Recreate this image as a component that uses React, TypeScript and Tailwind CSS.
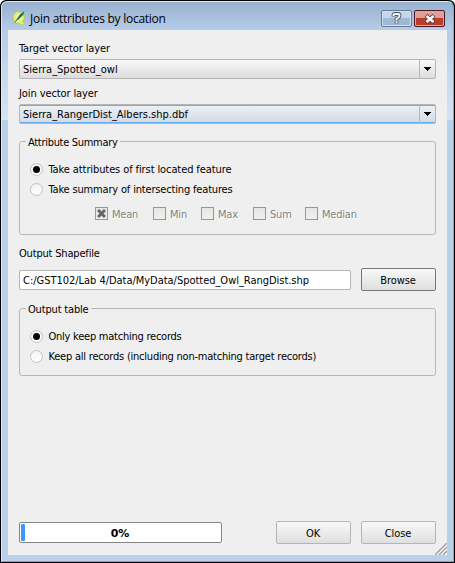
import type { ReactNode } from "react";

function Text({ children, className = "" }: { children: ReactNode; className?: string }) {
  return (
    <span className={`block whitespace-pre leading-[14px] ${className}`}>
      <span className="relative top-px">{children}</span>
    </span>
  );
}

function Combo({ children, active = false }: { children: ReactNode; active?: boolean }) {
  return (
    <div
      className={`flex h-5 w-[417px] rounded-[2px] border border-[#b5b5b5] ${
        active
          ? "bg-linear-to-b from-[#edf1f7] to-[#d2dae3] shadow-[inset_0_1px_#66aef8,inset_0_-1px_#66aef8]"
          : "bg-linear-to-b from-[#f9f9f9] to-[#dddddd]"
      }`}
    >
      <Text className="flex-1 pt-[2px] pl-[3px]">{children}</Text>
      <div className="flex w-4 items-center justify-center border-l border-[#b5b5b5]">
        <svg width="8" height="4" viewBox="0 0 8 4" shapeRendering="crispEdges">
          <path d="M0 0H7V1H6V2H5V3H4V4H3V3H2V2H1V1H0Z" />
        </svg>
      </div>
    </div>
  );
}

function Radio({ checked = false, children, tracking }: { checked?: boolean; children: ReactNode; tracking: string }) {
  return (
    <div className="flex h-5 items-center">
      <div className="flex size-[13px] items-center justify-center rounded-full border border-[#c2c2c2] bg-linear-to-b from-[#f2f2f2] to-white">
        {checked && <div className="size-[7px] rounded-full bg-black" />}
      </div>
      <Text className={`pl-[5.5px] ${tracking}`}>{children}</Text>
    </div>
  );
}

function Check({ checked = false, children, className }: { checked?: boolean; children: ReactNode; className: string }) {
  return (
    <div className={`flex h-[13px] items-center ${className}`}>
      <div className="flex size-[13px] shrink-0 items-center justify-center border border-[#979797] bg-linear-to-b from-[#e6e6e6] to-[#efefef]">
        {checked && (
          <svg width="9" height="9" viewBox="0 0 9 9">
            <path d="M1 1L8 8M8 1L1 8" stroke="#686868" strokeWidth="3" />
          </svg>
        )}
      </div>
      <Text className="pl-1 tracking-[-0.2px] text-[#808080] [text-shadow:1px_1px_white]">{children}</Text>
    </div>
  );
}

function Button({ children, strong = false }: { children: ReactNode; strong?: boolean }) {
  return (
    <button
      className={`flex h-[23px] w-[75px] items-center justify-center rounded-[2px] border bg-linear-to-b from-[#f8f8f8] to-[#dfdfdf] ${
        strong ? "border-[#777777]" : "border-[#b5b5b5]"
      }`}
    >
      <Text className="pr-px tracking-[-0.1px]">{children}</Text>
    </button>
  );
}

function Group({
  title,
  tracking,
  className,
  children,
}: {
  title: string;
  tracking: string;
  className: string;
  children: ReactNode;
}) {
  return (
    <section className={`w-[417px] rounded-[3px] border border-[#b7b7b7] ${className}`}>
      <Text className={`-mt-[7px] ml-[6px] w-fit bg-[#efefef] px-[2px] ${tracking}`}>{title}</Text>
      {children}
    </section>
  );
}

function AppLogo() {
  return (
    <svg width="16" height="16" viewBox="0 0 16 16">
      <path
        d="M6.500 1.500C4 2 2 4.500 2 8s1.500 5.500 4 5.500h2l2 1.500h2.500l1-1.500-1.800-1.500C13 10.500 13.500 9 13.300 7L12 4 9.500 2z"
        fill="#e3ee72"
        stroke="#b3c84a"
        strokeWidth=".8"
      />
      <path d="M7.500 3.500L5 6v5l2 1 3.500-2.500L11 7" fill="#f2f7b8" />
      <path d="M13.500 1L9 4.500 6.500 8 4.500 11l3-1.500L12 5z" fill="#1f7430" />
      <path d="M6 9.500L3.500 13" stroke="#4d8b35" />
    </svg>
  );
}

function TitleBar() {
  return (
    <header className="flex h-7 items-start pl-[9px]">
      <div className="pt-[8px]">
        <AppLogo />
      </div>
      <h1 className="flex-1 pt-[9px] pl-[3px] font-['Open_Sans',sans-serif] text-[12px] leading-4 tracking-[-0.26px] whitespace-nowrap">
        Join attributes by location
      </h1>
      <div className="flex gap-[2px] pt-2 pr-2">
        <div className="flex h-[17px] w-[31px] items-center justify-center rounded-[2px] border border-[#65799a] bg-linear-to-b from-[#c5d6ea] from-50% to-[#9fb8d4] to-50% shadow-[inset_0_0_0_1px_#d2e0f0]">
          <svg width="11" height="13" viewBox="0 0 11 13" fill="none">
            <path d="M2.500 4.500V3.500q0-1.500 1.500-1.500h3q1.500 0 1.500 1.500T7 6L5.500 7v1.200M5.500 9.500v2" stroke="#4b5568" strokeWidth="3.800" />
            <path d="M2.500 4V3.500q0-1.500 1.500-1.500h3q1.500 0 1.500 1.500T7 6L5.500 7v1M5.500 9.500v1.700" stroke="#f6f6f6" strokeWidth="2" />
          </svg>
        </div>
        <div className="flex h-[17px] w-[31px] items-center justify-center rounded-[2px] border border-[#4b1724] bg-linear-to-b from-[#dda198] from-50% to-[#bd3c28] to-50% shadow-[inset_0_0_0_1px_#e5a69c]">
          <svg width="12" height="10" viewBox="0 0 12 10">
            <path d="M2 1.500L10 8.500M10 1.500L2 8.500" stroke="#554550" strokeWidth="4.300" />
            <path d="M2.500 2L9.500 8M9.500 2L2.500 8" stroke="#f7f5f5" strokeWidth="2.600" />
          </svg>
        </div>
      </div>
    </header>
  );
}

export default function App() {
  return (
    <div className="h-[563px] w-[455px] rounded-t-[6px] bg-black p-px">
      <div className="h-[561px] w-[453px] overflow-hidden rounded-t-[6px] border border-t-[#dce7f3] border-r-[#35c8e5] border-b-[#35c8e5] border-l-[#dfeaf5] bg-[linear-gradient(to_bottom,#98b1cf_0,#b5cde7_28px,#d6e4f4_118px,#b9d1ea_118px)]">
        <TitleBar />
        <main className="ml-[6px] h-[525px] w-[439px] bg-[#efefef] pt-[11px] pl-[11px] font-['DejaVu_Sans_Condensed','DejaVu_Sans',sans-serif] text-[11px] text-black [font-stretch:condensed]">
          <Text className="tracking-[-0.1px]">Target vector layer</Text>
          <div className="mt-1">
            <Combo>Sierra_Spotted_owl</Combo>
          </div>
          <Text className="mt-[7px] tracking-[-0.1px]">Join vector layer</Text>
          <div className="mt-1">
            <Combo active>Sierra_RangerDist_Albers.shp.dbf</Combo>
          </div>
          <Group title="Attribute Summary" tracking="tracking-[-0.3px]" className="mt-[17px] h-[94px]">
            <div className="mt-[10px] ml-[10px]">
              <Radio checked tracking="tracking-[-0.1px]">Take attributes of first located feature</Radio>
              <Radio tracking="tracking-[-0.17px]">Take summary of intersecting features</Radio>
            </div>
            <div className="mt-2 ml-[75px] flex">
              <Check checked className="w-[58px]">Mean</Check>
              <Check className="w-[48px]">Min</Check>
              <Check className="w-[52px]">Max</Check>
              <Check className="w-[52px]">Sum</Check>
              <Check className="w-[70px]">Median</Check>
            </div>
          </Group>
          <Text className="mt-[11px] tracking-[-0.18px]">Output Shapefile</Text>
          <div className="mt-[8px] flex h-[23px] w-[417px] items-center justify-between">
            <div className="h-5 w-[332px] rounded-[2px] border border-[#b5b5b5] bg-white pt-[2px] pl-[3px]">
              <Text className="tracking-[-0.03px]">C:/GST102/Lab 4/Data/MyData/Spotted_Owl_RangDist.shp</Text>
            </div>
            <Button strong>Browse</Button>
          </div>
          <Group title="Output table" tracking="tracking-[-0.17px]" className="mt-[17px] h-[68px]">
            <div className="mt-[10px] ml-[10px]">
              <Radio checked tracking="tracking-[-0.24px]">Only keep matching records</Radio>
              <Radio tracking="tracking-[-0.22px]">Keep all records (including non-matching target records)</Radio>
            </div>
          </Group>
          <div className="mt-[145px] flex w-[417px] items-center">
            <div className="flex h-[21px] w-[203px] items-center rounded-[2px] border border-[#858585] bg-white pl-px">
              <div className="h-[17px] w-1 rounded-[1px] bg-[#3d98fb]" />
              <Text className="flex-1 pr-[6px] text-center font-['DejaVu_Sans',sans-serif] font-bold [font-stretch:normal]">0%</Text>
            </div>
            <div className="ml-auto flex gap-[10px]">
              <Button>OK</Button>
              <Button>Close</Button>
            </div>
          </div>
          <div className="-mt-px ml-auto h-3 w-3">
            <svg width="12" height="12" viewBox="0 0 12 12">
              <path d="M1 13L13 1M5 13l8-8M9 13l4-4" stroke="#fff" strokeWidth="1.200" />
              <path d="M0 12L12 0M4 12l8-8M8 12l4-4" stroke="#9c9c9c" strokeWidth="1.400" />
            </svg>
          </div>
        </main>
      </div>
    </div>
  );
}
